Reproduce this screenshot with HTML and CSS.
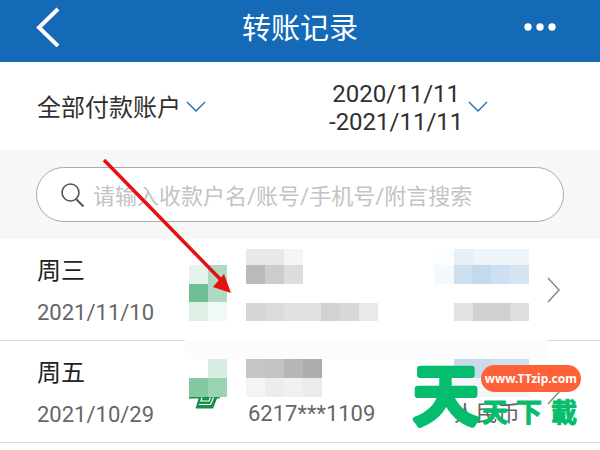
FILE: index.html
```html
<!DOCTYPE html>
<html lang="zh-CN">
<head>
  <meta charset="UTF-8">
  <meta name="viewport" content="width=device-width, initial-scale=1">
  <title>转账记录</title>
  <link rel="stylesheet" href="styles.css">
</head>
<body>
  <div class="page">
    <header class="topbar">
      <button type="button" class="icon-btn back" aria-label="返回">
        <svg width="24" height="40" viewBox="0 0 24 40"><path d="M22 2L3 20.500L22 39" fill="none" stroke="#fff" stroke-width="4"/></svg>
      </button>
      <h1>转账记录</h1>
      <button type="button" class="icon-btn more" aria-label="更多">
        <svg width="32" height="8" viewBox="0 0 32 8" fill="#fff"><circle cx="4" cy="4" r="3.700"/><circle cx="16" cy="4" r="3.700"/><circle cx="28" cy="4" r="3.700"/></svg>
      </button>
    </header>

    <div class="filters">
      <div class="filter">
        <select class="account" aria-label="付款账户">
          <option>全部付款账户</option>
        </select>
        <svg class="arrow" width="20" height="11" viewBox="0 0 20 11"><path d="M1 1L10 10L19 1" fill="none" stroke="#1c6fb9" stroke-width="1.400"/></svg>
      </div>
      <button type="button" class="filter dates">
        <span>2020/11/11<br>-2021/11/11</span>
        <svg class="arrow" width="20" height="11" viewBox="0 0 20 11"><path d="M1 1L10 10L19 1" fill="none" stroke="#1c6fb9" stroke-width="1.400"/></svg>
      </button>
    </div>

    <form class="search">
      <label class="search-box">
        <svg width="24" height="24" viewBox="0 0 24 24" fill="none" stroke="#555"><circle cx="9.500" cy="9.500" r="8.500" stroke-width="1.600"/><path d="M15 16L22.500 23.500" stroke-width="2"/></svg>
        <input type="text" aria-label="搜索" placeholder="请输入收款户名/账号/手机号/附言搜索">
      </label>
    </form>

    <ul class="records">
      <li>
        <a href="#" class="record">
          <div class="day">
            <strong>周三</strong>
            <time>2021/11/10</time>
          </div>
          <svg class="mosaic" width="38" height="72" viewBox="0 0 38 72">
            <rect x="0" y="16" width="19" height="19" fill="#e5f3eb"/>
            <rect x="19" y="16" width="19" height="37" fill="#addac1"/>
            <rect x="0" y="35" width="19" height="18" fill="#6fbf94"/>
            <rect x="0" y="53" width="19" height="19" fill="#dff0e6"/>
            <rect x="19" y="53" width="19" height="19" fill="#f1f9f5"/>
          </svg>
          <div class="payee">
            <svg class="mosaic" width="132" height="72" viewBox="0 0 132 72">
              <rect x="0" y="0" width="38" height="16" fill="#e8e8e8"/>
              <rect x="38" y="0" width="19" height="16" fill="#f5f5f5"/>
              <rect x="0" y="16" width="19" height="19" fill="#bababa"/>
              <rect x="19" y="16" width="19" height="19" fill="#cccccc"/>
              <rect x="38" y="16" width="19" height="19" fill="#dddddd"/>
              <rect x="0" y="54" width="19" height="18" fill="#d6d6d6"/>
              <rect x="19" y="54" width="19" height="18" fill="#dbdbdb"/>
              <rect x="38" y="54" width="37" height="18" fill="#e0e0e0"/>
              <rect x="75" y="54" width="19" height="18" fill="#d2d2d2"/>
              <rect x="94" y="54" width="19" height="18" fill="#d8d8d8"/>
              <rect x="113" y="54" width="19" height="18" fill="#e9e9e9"/>
            </svg>
          </div>
          <div class="amount">
            <svg class="mosaic" width="95" height="72" viewBox="0 0 95 72">
              <rect x="0" y="0" width="20" height="16" fill="#fbfdfe"/>
              <rect x="20" y="0" width="19" height="16" fill="#e7eff6"/>
              <rect x="39" y="0" width="56" height="16" fill="#eff4f9"/>
              <rect x="0" y="16" width="20" height="19" fill="#f5f9fc"/>
              <rect x="20" y="16" width="18" height="19" fill="#cbdfee"/>
              <rect x="38" y="16" width="19" height="19" fill="#c3daec"/>
              <rect x="57" y="16" width="19" height="19" fill="#cddff0"/>
              <rect x="76" y="16" width="19" height="19" fill="#d5e4f1"/>
              <rect x="20" y="54" width="19" height="18" fill="#e2e2e2"/>
              <rect x="39" y="54" width="37" height="18" fill="#d0d0d0"/>
              <rect x="76" y="54" width="19" height="18" fill="#dedede"/>
            </svg>
          </div>
          <svg class="chevron" width="14" height="26" viewBox="0 0 14 26"><path d="M1 1L12 13L1 25" fill="none" stroke="#8a8a8a" stroke-width="1.500"/></svg>
        </a>
      </li>
      <li class="faded">
        <a href="#" class="record">
          <div class="day">
            <strong>周五</strong>
            <time>2021/10/29</time>
          </div>
          <svg class="mosaic" width="38" height="72" viewBox="0 0 38 72">
            <rect x="19" y="8" width="19" height="19" fill="#d9eee3"/>
            <rect x="0" y="27" width="19" height="19" fill="#84c9a2"/>
            <rect x="19" y="27" width="19" height="19" fill="#9bd3b3"/>
            <g shape-rendering="auto">
              <path d="M0 46H31L30.500 47.500H28L24 57.500H6.500L9.500 47.500H0Z" fill="#15904a"/>
              <path d="M13 46.500L12 50H20L21.500 46.500M10 53.500H21.500L24.500 46.500" fill="none" stroke="#fff" stroke-width="1.200"/>
            </g>
          </svg>
          <div class="payee">
            <svg class="mosaic" width="76" height="46" viewBox="0 0 76 46">
              <rect x="0" y="8" width="19" height="19" fill="#c6c6c6"/>
              <rect x="19" y="8" width="19" height="19" fill="#c4c4c4"/>
              <rect x="38" y="8" width="19" height="19" fill="#b7b7b7"/>
              <rect x="57" y="8" width="19" height="19" fill="#adadad"/>
              <rect x="0" y="27" width="19" height="19" fill="#f4f4f4"/>
              <rect x="19" y="27" width="19" height="19" fill="#ececec"/>
              <rect x="38" y="27" width="19" height="19" fill="#f0f0f0"/>
              <rect x="57" y="27" width="19" height="19" fill="#ebebeb"/>
            </svg>
            <span>6217***1109</span>
          </div>
          <div class="amount">
            <svg class="mosaic" width="95" height="46" viewBox="0 0 95 46">
              <rect x="20" y="8" width="37" height="19" fill="#c9dbea"/>
              <rect x="57" y="8" width="38" height="19" fill="#cfdfed"/>
              <rect x="20" y="27" width="75" height="19" fill="#f2f5fa"/>
            </svg>
            <span>人民币</span>
          </div>
          <svg class="chevron" width="14" height="26" viewBox="0 0 14 26"><path d="M1 1L12 13L1 25" fill="none" stroke="#8a8a8a" stroke-width="1.500"/></svg>
        </a>
      </li>
    </ul>

    <svg class="pointer" width="132" height="138" viewBox="0 0 132 138">
      <path d="M2 2L120 123" stroke="#e60f12" stroke-width="3.500"/>
      <path d="M129 135L111 129L122 116Z" fill="#e60f12"/>
    </svg>

    <div class="watermark">
      <svg width="70" height="72" viewBox="0 0 70 72">
        <text class="wm-big" x="35" y="61">天</text>
      </svg>
      <div class="wm-side">
        <span class="wm-site">www.TTzip.com</span>
        <svg width="100" height="36" viewBox="0 0 100 36">
          <text class="wm-name" y="30"><tspan x="14">天</tspan><tspan x="48">下</tspan><tspan x="83">載</tspan></text>
        </svg>
      </div>
    </div>
  </div>
</body>
</html>
```
FILE: styles.css
```css
* {
  box-sizing: border-box;
}
body {
  margin: 0;
  background: #fff;
  color: #303030;
  font-family: Roboto, "Noto Sans CJK SC", sans-serif;
}
button, select, input {
  font: inherit;
  color: inherit;
  border: none;
  background: none;
  padding: 0;
  margin: 0;
}
svg {
  display: block;
  flex: none;
}
.page {
  position: relative;
}

/* top bar */
.topbar {
  display: grid;
  grid-template-columns: 1fr auto 1fr;
  align-items: center;
  height: 62px;
  padding: 0 36px 8px;
  background: #146ab7;
  color: #fff;
}
.topbar h1 {
  margin: 0;
  padding-top: 4px;
  font-size: 29px;
  line-height: 40px;
  font-weight: 400;
}
.icon-btn {
  cursor: pointer;
}
.back {
  justify-self: start;
}
.more {
  justify-self: end;
  padding-right: 8px;
}

/* filters */
.filters {
  display: grid;
  grid-template-columns: 1fr 1fr;
  align-items: center;
  height: 88px;
  padding: 0 37px;
}
.filter {
  display: flex;
  align-items: center;
  gap: 5px;
  font-size: 24px;
  line-height: 28px;
}
.account {
  appearance: none;
  height: 40px;
  padding-top: 4px;
}
.dates {
  padding-left: 29px;
  text-align: center;
}
.dates span {
  padding-top: 4px;
}

/* search */
.search {
  padding: 17px 36px;
  background: #f7f7f7;
}
.search-box {
  display: flex;
  align-items: center;
  gap: 8px;
  height: 55px;
  padding: 0 24px;
  border: 1px solid #aaa;
  border-radius: 28px;
  background: #fff;
}
.search-box input {
  flex: 1;
  min-width: 0;
  height: 40px;
  padding-top: 3px;
  font-size: 22px;
  outline: none;
}
.search-box input::placeholder {
  color: #c3c3c3;
}

/* records */
.records {
  list-style: none;
  margin: 0;
  padding: 0;
}
.records li {
  position: relative;
  border-bottom: 1px solid #dcdcdc;
}
.record {
  display: grid;
  grid-template-columns: 152px 38px 1fr 95px 32px;
  padding: 10px 39px 10px 37px;
  color: #666;
  font-size: 22px;
  line-height: 34px;
  text-decoration: none;
}
.day {
  display: flex;
  flex-direction: column;
  gap: 8px;
  padding-top: 5px;
}
.day strong {
  color: #222;
  font-size: 24px;
  font-weight: 400;
}
.payee {
  padding-left: 19px;
}
.payee span {
  display: block;
  padding-left: 2px;
}
.amount span {
  display: block;
  padding-right: 9px;
  text-align: right;
}
.mosaic {
  shape-rendering: crispEdges;
}
.chevron {
  align-self: center;
  justify-self: end;
}
.faded::before {
  content: "";
  position: absolute;
  top: -1px;
  left: 185px;
  right: 53px;
  height: 19px;
  background: #fcfcfc;
}
.faded .record {
  position: relative;
}

/* arrow over the list */
.pointer {
  position: absolute;
  top: 158px;
  left: 102px;
  pointer-events: none;
}

/* site mark over the list */
.watermark {
  position: absolute;
  top: 358px;
  right: 19px;
  display: flex;
  font-family: "Noto Sans CJK TC", sans-serif;
  pointer-events: none;
}
.watermark svg {
  overflow: visible;
}
.wm-big,
.wm-name {
  fill: #06bd6d;
  stroke: #06bd6d;
  stroke-linejoin: round;
  text-anchor: middle;
}
.wm-big {
  font-size: 65px;
  font-weight: 500;
  stroke-width: 6px;
}
.wm-name {
  font-size: 26px;
  font-weight: 700;
  stroke-width: 1px;
}
.wm-side {
  padding-top: 7px;
}
.wm-site {
  display: block;
  padding: 0 4px;
  border-radius: 14px;
  background: #ff6138;
  color: #fff;
  font-family: "Noto Sans", sans-serif;
  font-size: 12px;
  font-weight: 700;
  line-height: 27px;
  text-align: center;
}
```
